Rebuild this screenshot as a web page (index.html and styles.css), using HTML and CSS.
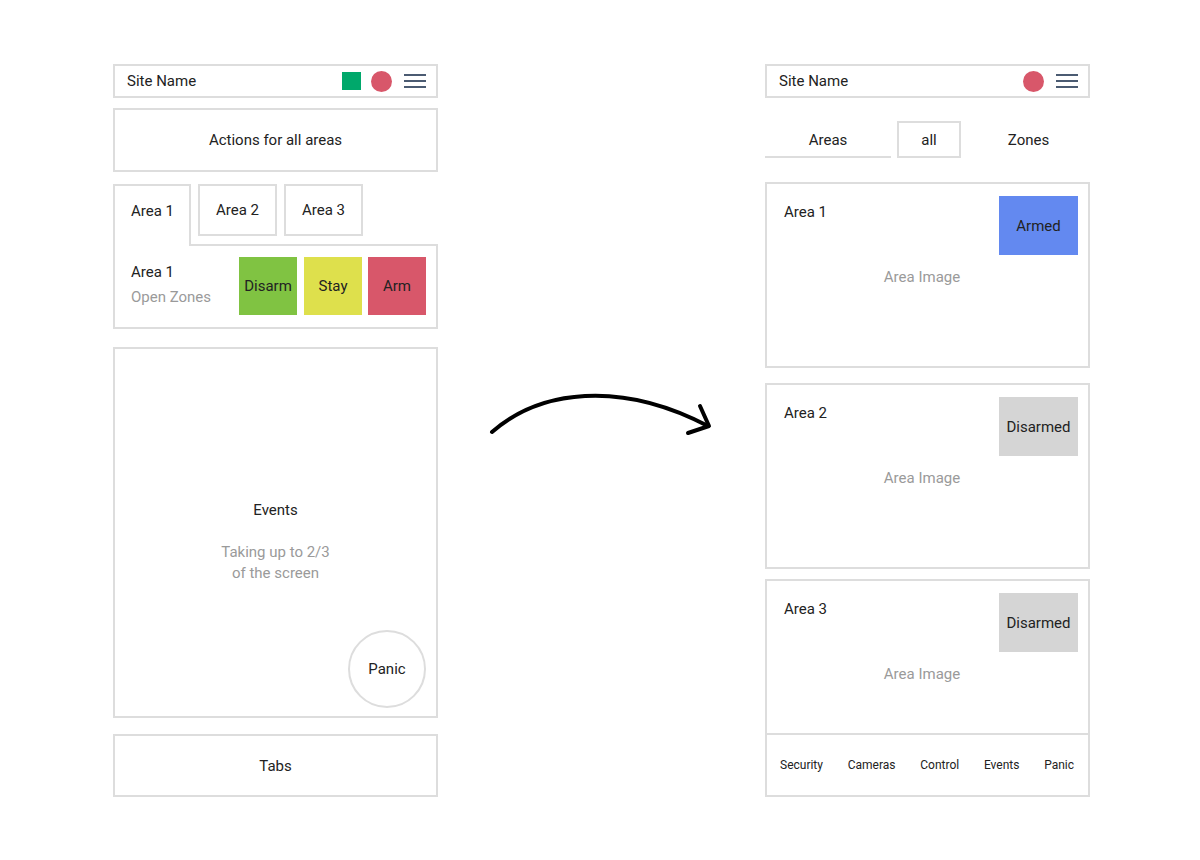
FILE: index.html
```html
<!DOCTYPE html>
<html lang="en">
<head>
  <meta charset="UTF-8">
  <title>Security app layout</title>
  <link rel="stylesheet" href="styles.css">
</head>
<body>

<div class="page">

  <!-- old layout -->
  <div class="phone">
    <div class="topbar">
      <span class="site">Site Name</span>
      <span class="sq-green"></span>
      <span class="dot-red"></span>
      <span class="burger"><i></i><i></i><i></i></span>
    </div>

    <div class="box actions">Actions for all areas</div>

    <div class="tabs">
      <div class="tab active">Area 1</div>
      <div class="tab">Area 2</div>
      <div class="tab">Area 3</div>
    </div>
    <div class="tab-panel">
      <div class="panel-text">
        <div>Area 1</div>
        <div class="muted">Open Zones</div>
      </div>
      <div class="btn disarm">Disarm</div>
      <div class="btn stay">Stay</div>
      <div class="btn arm">Arm</div>
    </div>

    <div class="box events">
      <div class="events-title">Events</div>
      <div class="muted">Taking up to 2/3<br>of the screen</div>
      <div class="panic">Panic</div>
    </div>

    <div class="box bottom-tabs">Tabs</div>
  </div>

  <!-- arrow between the two -->
  <div class="middle">
    <svg width="327" height="80" viewBox="438 380 327 80">
      <path d="M492 432 C540 390 620 380 708 426" fill="none" stroke="#000" stroke-width="4" stroke-linecap="round"/>
      <path d="M700 406 L709 426 L688 433" fill="none" stroke="#000" stroke-width="4" stroke-linecap="round" stroke-linejoin="round"/>
    </svg>
  </div>

  <!-- new layout -->
  <div class="phone">
    <div class="topbar">
      <span class="site">Site Name</span>
      <span class="dot-red"></span>
      <span class="burger"><i></i><i></i><i></i></span>
    </div>

    <div class="switch">
      <div class="sw-item sw-areas">Areas</div>
      <div class="sw-item sw-all">all</div>
      <div class="sw-item sw-zones">Zones</div>
    </div>

    <div class="card card-first">
      <div class="card-head">
        <span class="card-title">Area 1</span>
        <span class="status armed">Armed</span>
      </div>
      <div class="card-img">Area Image</div>
    </div>

    <div class="card card-second">
      <div class="card-head">
        <span class="card-title">Area 2</span>
        <span class="status">Disarmed</span>
      </div>
      <div class="card-img">Area Image</div>
    </div>

    <div class="card card-cut">
      <div class="card-head">
        <span class="card-title">Area 3</span>
        <span class="status">Disarmed</span>
      </div>
      <div class="card-img">Area Image</div>
    </div>

    <div class="tabbar">
      <span>Security</span>
      <span>Cameras</span>
      <span>Control</span>
      <span>Events</span>
      <span>Panic</span>
    </div>
  </div>

</div>

</body>
</html>
```

FILE: styles.css
```css
* {
  margin: 0;
  padding: 0;
  box-sizing: border-box;
}

body {
  background-color: #fff;
  font-family: Roboto, "Liberation Sans", sans-serif;
  font-size: 15px;
  color: #222;
}

.page {
  display: flex;
  align-items: flex-start;
  padding: 64px 0 0 113px;
}

.phone {
  width: 325px;
  display: flex;
  flex-direction: column;
}

.middle {
  width: 327px;
  padding-top: 316px;
}

.middle svg {
  display: block;
}

.muted {
  color: #9a9a9a;
}

/* top bar with site name */
.topbar {
  height: 34px;
  border: 2px solid #ddd;
  display: flex;
  align-items: center;
  padding: 0 10px 0 12px;
}

.site {
  flex: 1;
}

.sq-green {
  width: 19px;
  height: 18px;
  background-color: #00a86b;
  margin-right: 10px;
}

.dot-red {
  width: 21px;
  height: 21px;
  border-radius: 50%;
  background-color: #d8576a;
  margin-right: 12px;
}

.burger {
  width: 22px;
  display: flex;
  flex-direction: column;
  gap: 4px;
}

.burger i {
  display: block;
  height: 2px;
  background-color: #4b5b72;
}

.box {
  border: 2px solid #ddd;
  display: flex;
  align-items: center;
  justify-content: center;
}

.actions {
  height: 64px;
  margin-top: 10px;
}

/* area tabs */
.tabs {
  display: flex;
  align-items: flex-start;
  gap: 7px;
  margin-top: 12px;
}

.tab {
  width: 79px;
  height: 52px;
  border: 2px solid #ddd;
  display: flex;
  align-items: center;
  justify-content: center;
}

.tab.active {
  width: 78px;
  height: 62px;
  border-bottom: none;
  justify-content: flex-start;
  align-items: flex-start;
  padding: 16px 0 0 16px;
  margin-bottom: -2px;
  background-color: #fff;
  position: relative;
  z-index: 1;
}

.tab-panel {
  height: 85px;
  border: 2px solid #ddd;
  display: flex;
  align-items: flex-start;
  gap: 7px;
  padding: 11px 10px 0 16px;
}

.panel-text {
  flex: 1;
  line-height: 25px;
  padding-top: 3px;
}

.btn {
  width: 58px;
  height: 58px;
  display: flex;
  align-items: center;
  justify-content: center;
}

.btn.disarm {
  background-color: #80c342;
}

.btn.stay {
  background-color: #dee04c;
}

.btn.arm {
  background-color: #d8576a;
  margin-left: -1px;
}

/* events area */
.events {
  height: 371px;
  margin-top: 18px;
  flex-direction: column;
  padding-top: 18px;
  position: relative;
  text-align: center;
}

.events-title {
  line-height: 20px;
  margin-bottom: 22px;
}

.events .muted {
  line-height: 21px;
}

.panic {
  position: absolute;
  right: 10px;
  bottom: 8px;
  width: 78px;
  height: 78px;
  border: 2px solid #ddd;
  border-radius: 50%;
  display: flex;
  align-items: center;
  justify-content: center;
  color: #222;
}

.bottom-tabs {
  height: 63px;
  margin-top: 16px;
}

/* areas / all / zones switch */
.switch {
  display: flex;
  gap: 6px;
  margin-top: 23px;
  height: 37px;
}

.sw-item {
  display: flex;
  align-items: center;
  justify-content: center;
}

.sw-areas {
  width: 126px;
  border-bottom: 2px solid #ddd;
  padding-top: 2px;
}

.sw-all {
  width: 64px;
  border: 2px solid #ddd;
}

.sw-zones {
  flex: 1;
}

/* area cards */
.card {
  height: 186px;
  border: 2px solid #ddd;
  padding: 12px 10px 0 17px;
}

.card-first {
  margin-top: 24px;
}

.card-second {
  margin-top: 15px;
}

.card-cut {
  height: 154px;
  margin-top: 10px;
  border-bottom: none;
}

.card-head {
  display: flex;
  justify-content: space-between;
  align-items: flex-start;
}

.card-title {
  line-height: 20px;
  margin-top: 6px;
}

.status {
  width: 79px;
  height: 59px;
  background-color: #d5d5d5;
  display: flex;
  align-items: center;
  justify-content: center;
}

.status.armed {
  background-color: #6389f0;
}

.card-img {
  margin-top: 12px;
  line-height: 20px;
  text-align: center;
  padding-right: 18px;
  color: #9a9a9a;
}

.tabbar {
  height: 64px;
  border: 2px solid #ddd;
  display: flex;
  align-items: center;
  justify-content: space-between;
  padding: 0 14px 0 13px;
  font-size: 12px;
}
```
